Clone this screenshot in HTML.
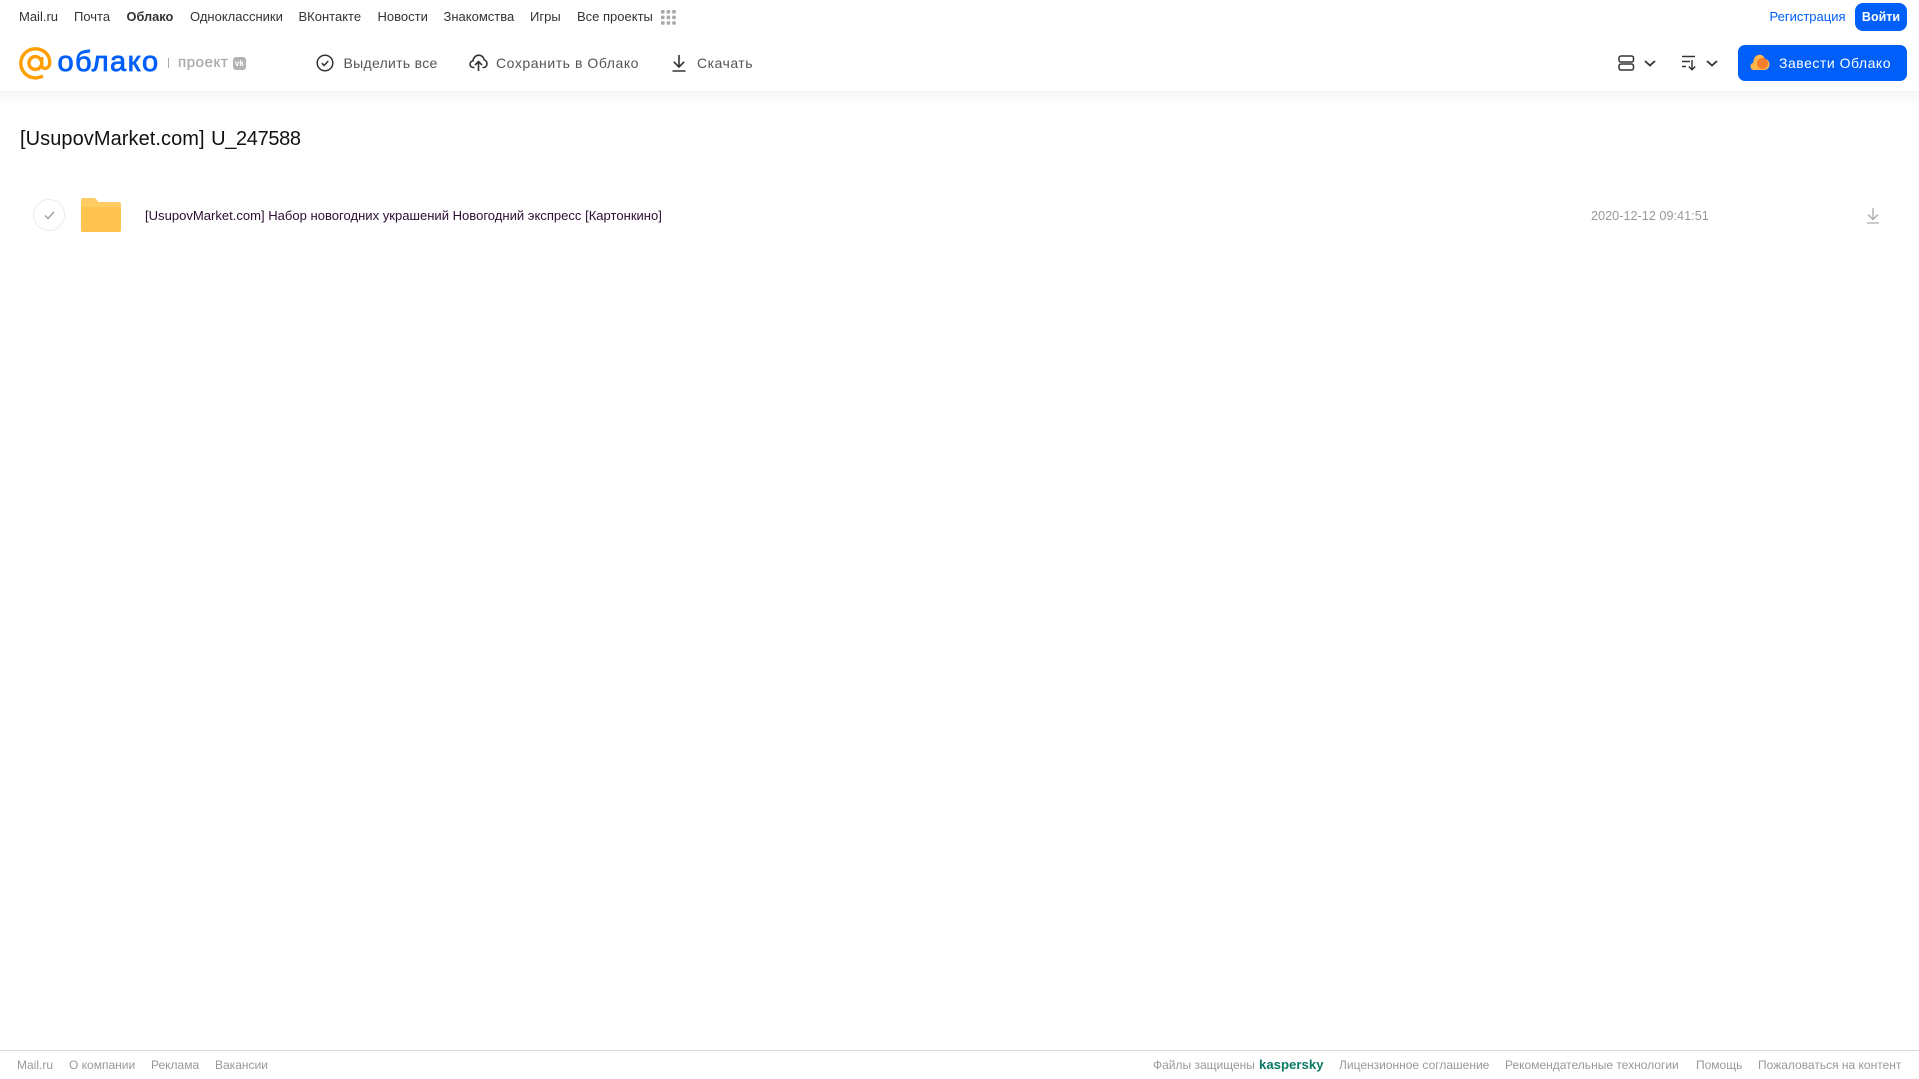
<!DOCTYPE html>
<html><head><meta charset="utf-8">
<style>
html,body{margin:0;padding:0;background:#fff;width:1919px;height:1079px;overflow:hidden}
body{font-family:"Liberation Sans",sans-serif;position:relative}
.t{position:absolute;white-space:nowrap;line-height:20px;height:20px}
.n{top:6.5px;font-size:13px;color:#333}
.b{top:53px;font-size:14px;color:#555;letter-spacing:.35px}
.f{top:1055px;font-size:12px;color:#999}
svg{position:absolute;overflow:visible}
#shadow{position:absolute;left:0;top:91px;width:1919px;height:14px;background:linear-gradient(#f5f5f5,#fff)}
</style></head><body>
<div id="shadow"></div>
<div class="t n" style="left:19px">Mail.ru</div>
<div class="t n" style="left:74px">Почта</div>
<div class="t n" style="left:126.500px;font-weight:bold;font-size:12.800px">Облако</div>
<div class="t n" style="left:190px">Одноклассники</div>
<div class="t n" style="left:298.500px">ВКонтакте</div>
<div class="t n" style="left:377.500px">Новости</div>
<div class="t n" style="left:443.500px">Знакомства</div>
<div class="t n" style="left:530px">Игры</div>
<div class="t n" style="left:577px">Все проекты</div>
<svg style="left:661px;top:10px" width="15" height="15" fill="#a8a8a8"><rect x="0" y="0" width="3.6" height="3.6" rx="1"/><rect x="5.6" y="0" width="3.6" height="3.6" rx="1"/><rect x="11.2" y="0" width="3.6" height="3.6" rx="1"/><rect x="0" y="5.6" width="3.6" height="3.6" rx="1"/><rect x="5.6" y="5.6" width="3.6" height="3.6" rx="1"/><rect x="11.2" y="5.6" width="3.6" height="3.6" rx="1"/><rect x="0" y="11.2" width="3.6" height="3.6" rx="1"/><rect x="5.6" y="11.2" width="3.6" height="3.6" rx="1"/><rect x="11.2" y="11.2" width="3.6" height="3.6" rx="1"/></svg>
<div class="t n" style="left:1769.500px;color:#005ff9">Регистрация</div>
<div class="t" style="left:1855px;top:3px;width:52px;height:28px;line-height:28px;background:#005ff9;border-radius:8px;color:#fff;font-size:12.500px;font-weight:bold;text-align:center">Войти</div>

<svg style="left:19px;top:47px" width="33" height="33" viewBox="0 0 33 33" fill="none" stroke="#ff9e00" stroke-width="3.4"><circle cx="16.3" cy="16" r="6.4"/><path d="M22.7 10v8.500c0 4.200 7.800 4.200 8-2.500C31 7.500 24.500 1.800 16.300 1.800 8.300 1.800 1.800 8.300 1.800 16.300s6.500 14.600 14.500 14.600c2.900 0 5.300-.7 7.600-2"/></svg>
<div class="t" style="left:57.500px;top:46px;height:32px;line-height:32px;font-size:29px;color:#005ff9;letter-spacing:1.400px;-webkit-text-stroke:.8px #005ff9">облако</div>
<div style="position:absolute;left:168px;top:58px;width:1px;height:10px;background:#aaa"></div>
<div class="t" style="left:178px;top:52.500px;font-size:15px;color:#aaa;letter-spacing:.6px;-webkit-text-stroke:.3px #aaa">проект</div>
<div class="t" style="left:233px;top:57px;width:13px;height:13px;line-height:13px;background:#b3b3b3;border-radius:3px;color:#fff;font-size:8px;font-weight:bold;text-align:center">vk</div>

<svg style="left:316px;top:54px" width="18" height="18" viewBox="0 0 18 18" fill="none" stroke="#333" stroke-width="1.500"><circle cx="9" cy="9" r="7.800"/><path d="M5.800 9.200l2.300 2.300 4.200-4.500"/></svg>
<div class="t b" style="left:343.500px;letter-spacing:.3px">Выделить все</div>
<svg style="left:469px;top:54px" width="19" height="18" viewBox="0 0 19 18" fill="none" stroke="#333" stroke-width="1.600"><path d="M5.500 13.500H4.500C2.500 13.500 1 12 1 10.200c0-1.700 1.200-3 2.900-3.300C4.400 3.500 6.800 1.200 9.700 1.200c2.800 0 5 2 5.500 4.700 1.600.4 2.800 2 2.800 3.800 0 2-1.500 3.800-3.500 3.800h-1"/><path d="M9.500 17V8M6 11l3.500-3.500L13 11"/></svg>
<div class="t b" style="left:496px;letter-spacing:.55px">Сохранить в Облако</div>
<svg style="left:671px;top:54px" width="16" height="18" viewBox="0 0 16 18" fill="none" stroke="#333" stroke-width="1.600"><path d="M8 1v11.500M2.800 7.800L8 13l5.200-5.200M1.500 17h13"/></svg>
<div class="t b" style="left:697px;letter-spacing:.5px">Скачать</div>

<svg style="left:1618px;top:55px" width="16" height="16" viewBox="0 0 16 16" fill="none" stroke="#333" stroke-width="1.500"><rect x="1" y="1" width="14.500" height="6" rx="2"/><rect x="1" y="9" width="14.500" height="6" rx="2"/></svg>
<svg style="left:1644px;top:60px" width="12" height="7" viewBox="0 0 12 7" fill="none" stroke="#333" stroke-width="1.800"><path d="M1 1l5 4.500L11 1"/></svg>
<svg style="left:1681px;top:55px" width="16" height="16" viewBox="0 0 16 16" fill="none" stroke="#333" stroke-width="1.400"><path d="M1 1.500h13M1 6.500h8M1 11.500h4M11 5v9.500M7.800 11.500l3.200 3.200 3.200-3.200"/></svg>
<svg style="left:1706px;top:60px" width="12" height="7" viewBox="0 0 12 7" fill="none" stroke="#333" stroke-width="1.800"><path d="M1 1l5 4.500L11 1"/></svg>

<div style="position:absolute;left:1738px;top:45px;width:169px;height:36px;background:#005ff9;border-radius:7px"></div>
<svg style="left:1750px;top:54px" width="20" height="17" viewBox="0 0 20 17"><path d="M4 16C1.800 16 .5 14.200.5 12.200.5 10.300 1.700 9 3.300 8.600 3.400 4 6 .8 9.500.8c2.600 0 4.500 1.600 5.200 4 2.800.4 4.800 2.600 4.800 5.600 0 3-2.300 5.600-5 5.600z" fill="#ffb74a"/><circle cx="12.500" cy="9.500" r="5.500" fill="#f57c2c"/></svg>
<div class="t" style="left:1779px;top:53px;font-size:14px;color:#fff;letter-spacing:.52px">Завести Облако</div>

<div class="t" style="left:20px;top:126px;height:26px;line-height:26px;font-size:20px;color:#111"><span style="letter-spacing:.07px">[UsupovMarket.com]</span><span style="margin-left:6.500px;letter-spacing:-.35px">U_247588</span></div>

<div style="position:absolute;left:33px;top:199px;width:30px;height:30px;border:1px solid #ececec;border-radius:50%"></div>
<svg style="left:44px;top:211px" width="11" height="9" viewBox="0 0 11 9" fill="none" stroke="#999" stroke-width="1.300"><path d="M1 4.500l3 3L10 1"/></svg>
<svg style="left:81px;top:198px" width="40" height="34" viewBox="0 0 40 34"><path d="M2 0h10c2.500 0 3.500 1 4.500 2.800L17.500 4H38a2 2 0 0 1 2 2v26a2 2 0 0 1-2 2H2a2 2 0 0 1-2-2V2a2 2 0 0 1 2-2z" fill="#ffcd63"/><path d="M0 9h40v23a2 2 0 0 1-2 2H2a2 2 0 0 1-2-2z" fill="#ffc34f"/></svg>
<div class="t" style="left:145px;top:206px;font-size:13.060px;color:#2c0d33">[UsupovMarket.com] Набор новогодних украшений Новогодний экспресс [Картонкино]</div>
<div class="t" style="left:1591px;top:206px;font-size:12.700px;color:#999">2020-12-12 09:41:51</div>
<svg style="left:1866px;top:207px" width="14" height="17" viewBox="0 0 14 17" fill="none" stroke="#aaa" stroke-width="1.300"><path d="M7 1v11M2 7.500L7 12.500l5-5M1 16h12"/></svg>

<div style="position:absolute;left:0;top:1050px;width:1919px;height:1px;background:#d9d9d9"></div>
<div class="t f" style="left:17px">Mail.ru</div>
<div class="t f" style="left:69px">О компании</div>
<div class="t f" style="left:151px">Реклама</div>
<div class="t f" style="left:215px">Вакансии</div>
<div class="t f" style="left:1153px">Файлы защищены</div>
<div class="t f" style="left:1259px;color:#0a7a63;font-weight:bold;font-size:13.200px">kaspersky</div>
<div class="t f" style="left:1339px">Лицензионное соглашение</div>
<div class="t f" style="left:1505px">Рекомендательные технологии</div>
<div class="t f" style="left:1696px">Помощь</div>
<div class="t f" style="left:1758px">Пожаловаться на контент</div>
</body></html>
